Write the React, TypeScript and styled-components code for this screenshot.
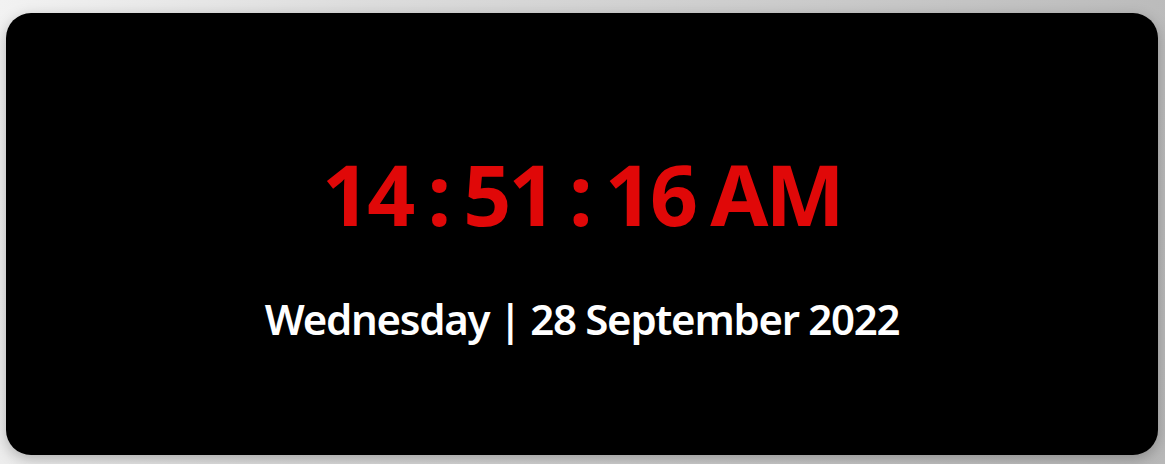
import React from "react";
import styled, { createGlobalStyle } from "styled-components";

const Global = createGlobalStyle`
  html, body { margin: 0; padding: 0; }
  body {
    width: 1165px;
    height: 464px;
    overflow: hidden;
    background: linear-gradient(100deg, #f2f2f2 0%, #dcdcdc 30%, #c8c8c8 70%, #b8b8b8 100%);
    font-family: "Noto Sans", "Open Sans", sans-serif;
  }
`;

const Page = styled.div`
  box-sizing: border-box;
  height: 464px;
  padding: 13px 7px 9px 6px;
  display: flex;
`;

const Card = styled.div`
  flex: 1;
  box-sizing: border-box;
  padding-top: 24px;
  background: #000;
  border-radius: 25px;
  box-shadow: 0 4px 14px rgba(0, 0, 0, 0.25);
  display: flex;
  flex-direction: column;
  align-items: center;
  justify-content: center;
`;

const Time = styled.div`
  color: #e00808;
  font-size: 84px;
  font-weight: 700;
  letter-spacing: -2.8px;
  word-spacing: -4px;
  line-height: 1;
`;

const DateLine = styled.div`
  color: #fff;
  font-size: 42px;
  font-weight: 600;
  letter-spacing: -1.3px;
  line-height: 1;
  margin-top: 62px;
`;

export default function App() {
  return (
    <>
      <Global />
      <Page>
        <Card>
          <Time>14 : 51 : 16 AM</Time>
          <DateLine>Wednesday | 28 September 2022</DateLine>
        </Card>
      </Page>
    </>
  );
}
